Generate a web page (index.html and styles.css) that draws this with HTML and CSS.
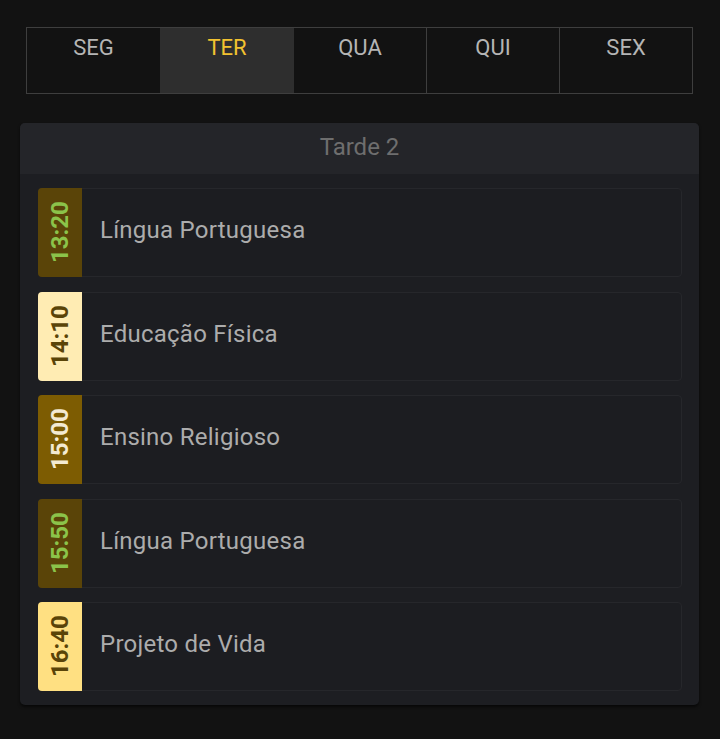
FILE: index.html
```html
<!DOCTYPE html>
<html lang="pt">
<head>
<meta charset="utf-8">
<title>Horário</title>
<link rel="stylesheet" href="styles.css">
</head>
<body>
<nav class="tabs">
  <div class="tab">SEG</div>
  <div class="tab active">TER</div>
  <div class="tab">QUA</div>
  <div class="tab">QUI</div>
  <div class="tab">SEX</div>
</nav>
<section class="card">
  <header class="card-head">Tarde 2</header>
  <div class="card-body">
    <div class="row">
      <div class="time t-olive">13:20</div>
      <div class="subject">Língua Portuguesa</div>
    </div>
    <div class="row">
      <div class="time t-cream">14:10</div>
      <div class="subject">Educação Física</div>
    </div>
    <div class="row">
      <div class="time t-gold">15:00</div>
      <div class="subject">Ensino Religioso</div>
    </div>
    <div class="row">
      <div class="time t-olive">15:50</div>
      <div class="subject">Língua Portuguesa</div>
    </div>
    <div class="row">
      <div class="time t-yellow">16:40</div>
      <div class="subject">Projeto de Vida</div>
    </div>
  </div>
</section>
</body>
</html>
```
FILE: styles.css
```css
* { box-sizing: border-box; }
html, body { margin: 0; padding: 0; }
body {
  background: #121212;
  font-family: Roboto, "Noto Sans", Arial, sans-serif;
  width: 720px;
  height: 739px;
  overflow: hidden;
  padding-top: 27px;
}
.tabs {
  display: grid;
  grid-template-columns: repeat(5, 1fr);
  margin: 0 27px 0 26px;
  height: 67px;
  border: 1px solid #3e3e3e;
}
.tab {
  color: #b5b5b5;
  font-size: 22px;
  line-height: 26px;
  text-align: center;
  padding-top: 7px;
  border-left: 1px solid #3e3e3e;
}
.tab:first-child { border-left: none; }
.tab.active {
  background: #2e2e2e;
  color: #f2c230;
  border-left-color: #2e2e2e;
}
.tab.active + .tab { border-left-color: #2e2e2e; }
.card {
  margin: 29px 21px 0 20px;
  background: #1d1e22;
  border-radius: 5px;
  box-shadow: 0 2px 3px rgba(0,0,0,0.6);
  overflow: hidden;
}
.card-head {
  height: 51px;
  background: #242529;
  color: #6e6e6e;
  font-size: 24px;
  line-height: 49px;
  text-align: center;
}
.card-body {
  display: flex;
  flex-direction: column;
  gap: 14.5px;
  padding: 14px 17px 14px 18px;
}
.row {
  display: flex;
  align-items: center;
  height: 89px;
  border: 1px solid #26272b;
  border-radius: 4px;
  background: #1c1d21;
}
.time {
  align-self: stretch;
  width: 44px;
  margin: -1px 0 -1px -1px;
  display: flex;
  align-items: center;
  justify-content: center;
  writing-mode: vertical-rl;
  transform: rotate(180deg);
  border-radius: 0 4px 4px 0;
  font-size: 24px;
  font-weight: 700;
}
.t-olive { background: #5a4408; color: #8bc34a; }
.t-cream { background: #ffecb3; color: #5a4408; }
.t-gold { background: #7d5c02; color: #f3ead2; }
.t-yellow { background: #ffe082; color: #5a4408; }
.subject {
  padding-left: 18px;
  padding-bottom: 5px;
  color: #acacac;
  font-size: 24px;
  letter-spacing: 0.25px;
}
```
